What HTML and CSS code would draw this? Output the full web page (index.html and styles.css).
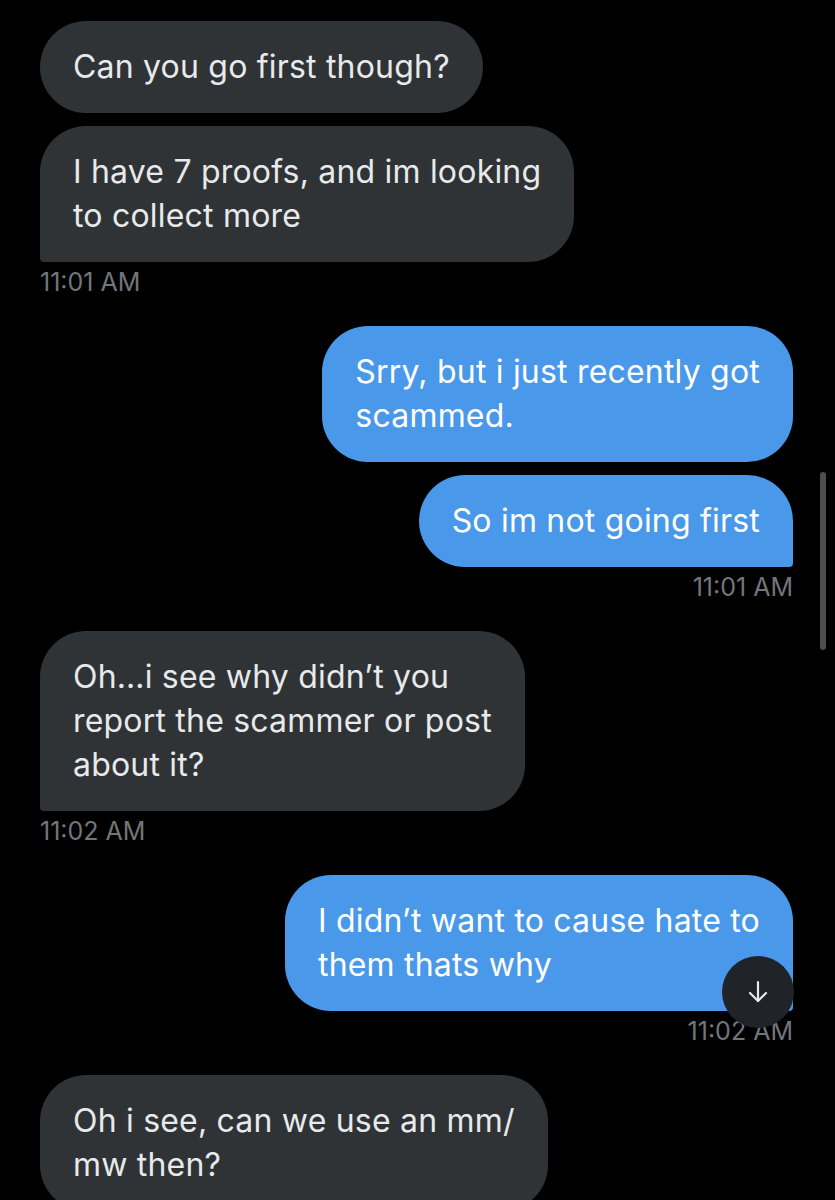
FILE: index.html
```html
<!DOCTYPE html>
<html lang="en">
<head>
  <meta charset="UTF-8" />
  <meta name="viewport" content="width=device-width, initial-scale=1" />
  <title>Messages</title>
  <link rel="stylesheet" href="styles.css">
</head>
<body>
  <div class="chat">
    <div class="bubble in">Can you go first though?</div>
    <div class="bubble in tail">I have 7 proofs, and im looking<br>to collect more</div>
    <div class="time">11:01 AM</div>

    <div class="bubble out">Srry, but i just recently got<br>scammed.</div>
    <div class="bubble out tail">So im not going first</div>
    <div class="time right">11:01 AM</div>

    <div class="bubble in tail">Oh…i see why didn’t you<br>report the scammer or post<br>about it?</div>
    <div class="time">11:02 AM</div>

    <div class="bubble out tail">I didn’t want to cause hate to<br>them thats why</div>
    <div class="time right">11:02 AM</div>

    <div class="bubble in">Oh i see, can we use an mm/<br>mw then?</div>
  </div>

  <div class="scrollbar"></div>

  <button class="jump" aria-label="Scroll to bottom">
    <svg width="24" height="24" viewBox="0 0 24 24" fill="none" stroke="#e7e9ea" stroke-width="2.2" stroke-linecap="round" stroke-linejoin="round">
      <path d="M12 2v19"/>
      <path d="M4 13l8 8 8-8"/>
    </svg>
  </button>
</body>
</html>
```

FILE: styles.css
```css
body {
  margin: 0;
  background-color: #000;
  font-family: Inter, "Liberation Sans", sans-serif;
  overflow: hidden;
}
.chat {
  display: flex;
  flex-direction: column;
  padding: 21px 42px 0 40px;
}
.bubble {
  padding: 24px 33px;
  font-size: 32px;
  line-height: 44px;
  letter-spacing: 0.2px;
  border-radius: 46px;
  margin-bottom: 13px;
}
.in {
  align-self: flex-start;
  background-color: #2f3336;
  color: #e7e9ea;
}
.out {
  align-self: flex-end;
  background-color: #4a98e9;
  color: #fff;
}
.in.tail { border-bottom-left-radius: 4px; }
.out.tail { border-bottom-right-radius: 4px; }
.time {
  margin: -7px 0 30px;
  font-size: 25px;
  line-height: 28px;
  color: #71767b;
}
.time.right { text-align: right; }
.scrollbar {
  position: absolute;
  left: 820px;
  top: 472px;
  width: 6px;
  height: 178px;
  border-radius: 3px;
  background-color: #4d4d4d;
}
.jump {
  position: absolute;
  left: 722px;
  top: 956px;
  width: 72px;
  height: 72px;
  border: none;
  border-radius: 50%;
  background-color: #202327;
  display: flex;
  align-items: center;
  justify-content: center;
  padding: 0;
}
```
